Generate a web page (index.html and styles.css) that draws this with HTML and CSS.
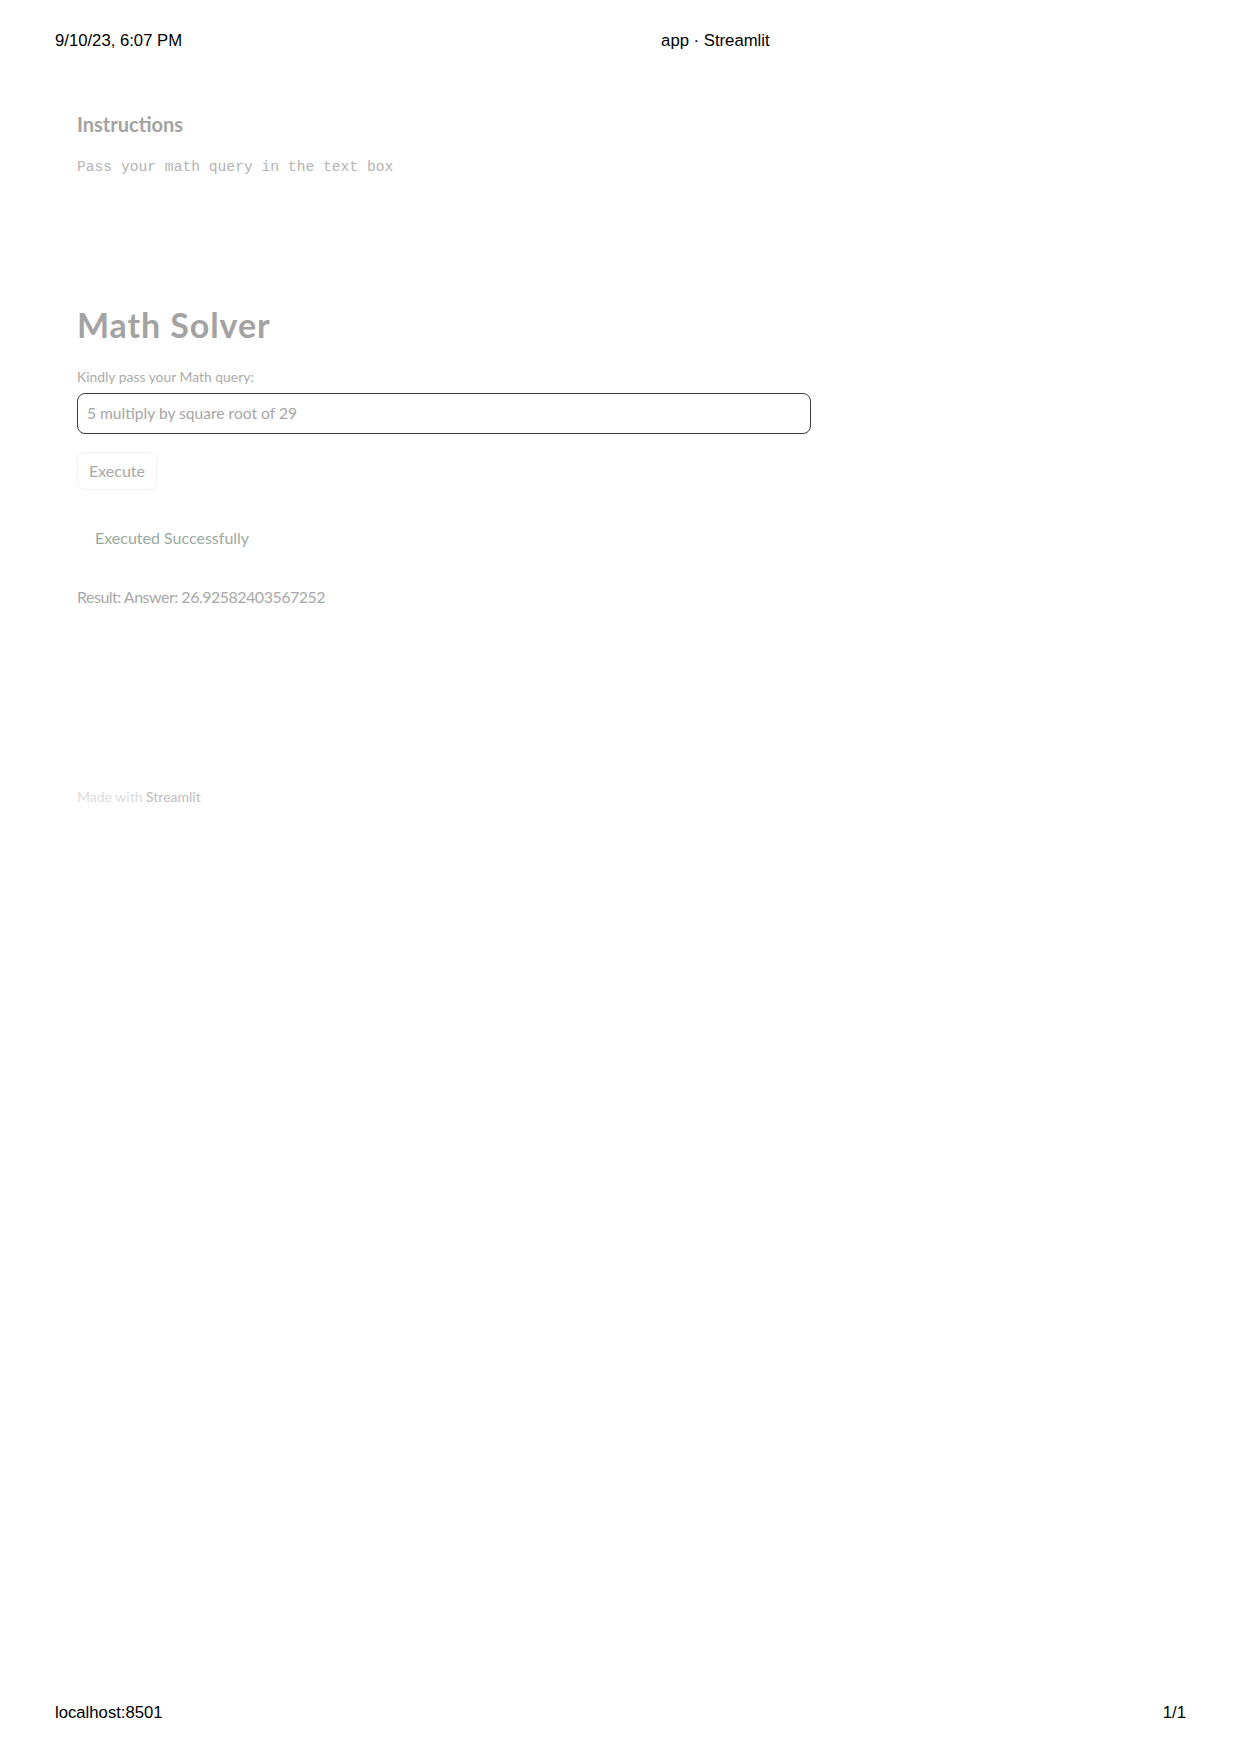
FILE: index.html
```html
<!DOCTYPE html>
<html lang="en">
<head>
<meta charset="utf-8">
<title>app · Streamlit</title>
<link rel="stylesheet" href="styles.css">
</head>
<body>
<div class="page">
  <header class="print-head">
    <span class="date">9/10/23, 6:07 PM</span>
    <span class="title">app · Streamlit</span>
  </header>
  <main class="app">
    <h3 class="sub">Instructions</h3>
    <p class="mono">Pass your math query in the text box</p>
    <h1 class="heading">Math Solver</h1>
    <label class="label" for="q">Kindly pass your Math query:</label>
    <div class="input" id="q">5 multiply by square root of 29</div>
    <div class="btn">Execute</div>
    <div class="alert">Executed Successfully</div>
    <p class="result">Result: Answer: 26.92582403567252</p>
    <p class="made">Made with <span class="brand">Streamlit</span></p>
  </main>
  <footer class="print-foot">
    <span>localhost:8501</span>
    <span>1/1</span>
  </footer>
</div>
</body>
</html>
```

FILE: styles.css
```css
html, body {
  margin: 0;
  padding: 0;
  background: #fff;
}

.page {
  min-height: 1754px;
  display: flex;
  flex-direction: column;
}

.print-head {
  display: flex;
  padding: 31px 0 0 55px;
  font-family: "Liberation Sans", Arial, sans-serif;
  font-size: 16.7px;
  line-height: 20px;
  color: #000;
}

.print-head .title {
  margin-left: 479px;
}

.app {
  display: flex;
  flex-direction: column;
  align-items: flex-start;
  padding-left: 77px;
  width: 734px;
  font-family: Lato, "Noto Sans", sans-serif;
}

.sub {
  margin: 61px 0 0;
  font-size: 20px;
  line-height: 24px;
  font-weight: 700;
  color: #a3a3a3;
}

.mono {
  margin: 22px 0 0;
  font-family: "Liberation Mono", "DejaVu Sans Mono", monospace;
  font-size: 14.65px;
  line-height: 18px;
  color: #b3b3b3;
}

.heading {
  margin: 129px 0 0;
  font-size: 34px;
  line-height: 40px;
  font-weight: 700;
  letter-spacing: 0.9px;
  color: #a3a3a3;
}

.label {
  margin-top: 23px;
  font-size: 13.9px;
  line-height: 18px;
  color: #ababab;
}

.input {
  box-sizing: border-box;
  margin-top: 7px;
  width: 734px;
  height: 41px;
  border: 1px solid #3a3a3a;
  border-radius: 8px;
  padding: 0 9px;
  font-size: 15.6px;
  line-height: 39px;
  color: #a6a6a6;
}

.btn {
  box-sizing: border-box;
  margin-top: 18px;
  width: 80px;
  height: 38px;
  border: 1px solid #f3f3f3;
  border-radius: 8px;
  text-align: center;
  font-size: 16px;
  line-height: 36px;
  color: #a8a8a8;
}

.alert {
  box-sizing: border-box;
  margin-top: 20px;
  width: 734px;
  padding: 16px 18px;
  border-radius: 8px;
  font-size: 16px;
  line-height: 24px;
  color: #9aa99f;
}

.result {
  margin: 19px 0 0;
  font-size: 16px;
  line-height: 24px;
  letter-spacing: -0.5px;
  color: #a8a8a8;
}

.made {
  margin: 179px 0 0;
  font-size: 14px;
  line-height: 18px;
  color: #dcdcdc;
}

.brand {
  color: #bdbdbd;
}

.print-foot {
  margin-top: auto;
  display: flex;
  justify-content: space-between;
  padding: 0 54px 31px 55px;
  font-family: "Liberation Sans", Arial, sans-serif;
  font-size: 16.7px;
  line-height: 20px;
  color: #000;
}
```
